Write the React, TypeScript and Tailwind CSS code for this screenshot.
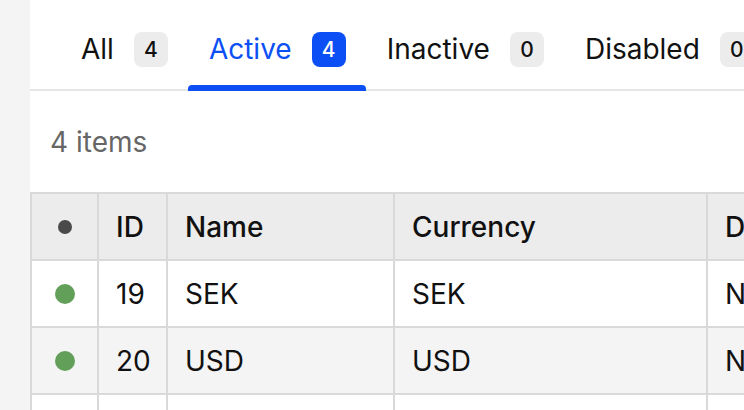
import React from 'react';

const tabs = [
  { label: 'All', count: 4 },
  { label: 'Active', count: 4 },
  { label: 'Inactive', count: 0 },
  { label: 'Disabled', count: 0 },
];

const rows = [
  { id: 19, name: 'SEK', currency: 'SEK', def: 'No' },
  { id: 20, name: 'USD', currency: 'USD', def: 'No' },
  { id: 21, name: 'EUR', currency: 'EUR', def: 'Yes' },
];

export default function App() {
  const activeTab = 'Active';

  return (
    <div
      className="flex h-[410px] w-[744px] overflow-hidden bg-[#f4f4f4]"
      style={{ fontFamily: 'Inter, "Noto Sans", sans-serif' }}
    >
      <div className="w-[30px] shrink-0" />
      <div className="flex min-w-0 flex-1 flex-col overflow-hidden bg-white">
        {/* Tabs */}
        <div className="flex shrink-0 border-b-2 border-[#e6e6e6] pl-[30px]">
          {tabs.map((tab) => {
            const active = tab.label === activeTab;
            return (
              <button
                key={tab.label}
                className={`relative flex shrink-0 items-center gap-5 px-5 pt-[32px] pb-[22px] text-[28px] leading-[35px] ${
                  active ? 'text-[#0b4ff5]' : 'text-[#111]'
                }`}
              >
                <span className="pl-px">{tab.label}</span>
                <span
                  className={`flex h-[35px] min-w-[34px] items-center justify-center rounded-[8px] px-2 text-[21px] font-medium ${
                    active ? 'bg-[#0b4ff5] text-white' : 'bg-[#ececec] text-[#111]'
                  }`}
                >
                  {tab.count}
                </span>
                {active && (
                  <span className="absolute right-0 bottom-[-2px] left-0 h-[6px] rounded-t-[4px] bg-[#0b4ff5]" />
                )}
              </button>
            );
          })}
        </div>

        {/* Count */}
        <div className="flex h-[101px] shrink-0 items-center px-5 text-[28px] text-[#666]">4 items</div>

        {/* Table */}
        <table className="w-[900px] shrink-0 table-fixed border-collapse text-left text-[28px] text-[#111]">
          <colgroup>
            <col className="w-[67px]" />
            <col className="w-[69px]" />
            <col className="w-[227px]" />
            <col className="w-[313px]" />
            <col className="w-[224px]" />
          </colgroup>
          <thead>
            <tr className="bg-[#ececec]">
              <th className="h-[67px] border-2 border-[#d9d9d9] p-0">
                <div className="flex justify-center">
                  <span className="h-[14px] w-[14px] rounded-full bg-[#4a4a4a]" />
                </div>
              </th>
              <th className="h-[67px] border-2 border-[#d9d9d9] pr-4 pl-[17px] font-medium">ID</th>
              <th className="h-[67px] border-2 border-[#d9d9d9] pr-4 pl-[17px] font-medium">Name</th>
              <th className="h-[67px] border-2 border-[#d9d9d9] pr-4 pl-[17px] font-medium">Currency</th>
              <th className="h-[67px] border-2 border-[#d9d9d9] pr-4 pl-[17px] font-medium">Default</th>
            </tr>
          </thead>
          <tbody>
            {rows.map((row, i) => (
              <tr key={row.id} className={i % 2 === 1 ? 'bg-[#f4f4f4]' : 'bg-white'}>
                <td className="h-[67px] border-2 border-[#d9d9d9] p-0">
                  <div className="flex justify-center">
                    <span className="h-[20px] w-[20px] rounded-full bg-[#62a05a]" />
                  </div>
                </td>
                <td className="h-[67px] border-2 border-[#d9d9d9] pr-4 pl-[17px]">{row.id}</td>
                <td className="h-[67px] border-2 border-[#d9d9d9] pr-4 pl-[17px]">{row.name}</td>
                <td className="h-[67px] border-2 border-[#d9d9d9] pr-4 pl-[17px]">{row.currency}</td>
                <td className="h-[67px] border-2 border-[#d9d9d9] pr-4 pl-[17px]">{row.def}</td>
              </tr>
            ))}
          </tbody>
        </table>
      </div>
    </div>
  );
}
